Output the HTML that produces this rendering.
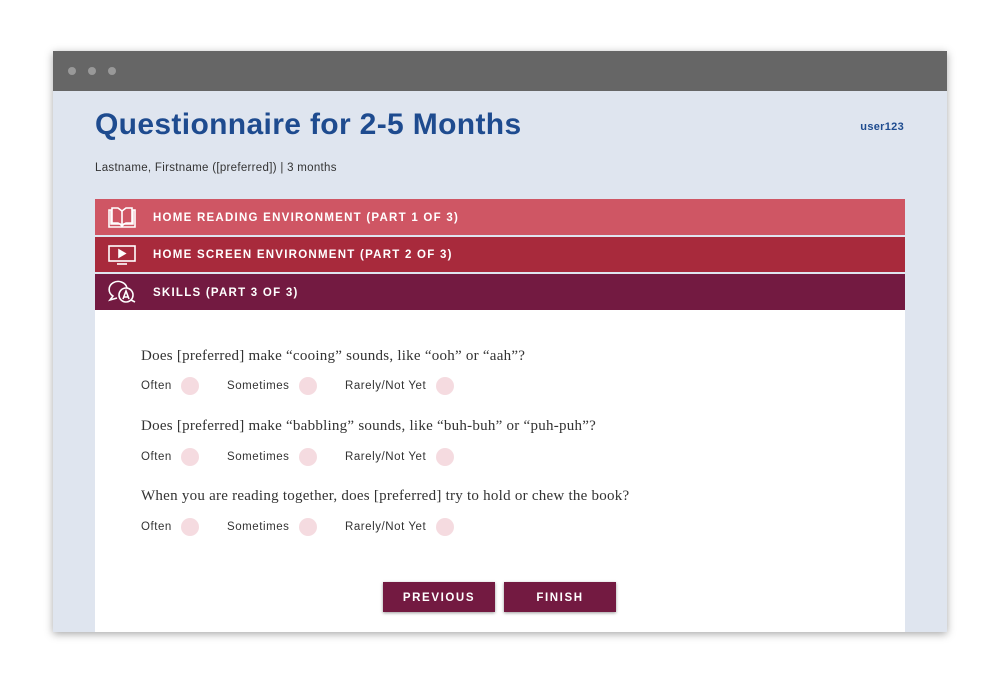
<!DOCTYPE html>
<html><head><style>
body{margin:0;width:1000px;height:684px;background:#fff;position:relative;font-family:"Liberation Sans",sans-serif;overflow:hidden}
.win{position:absolute;left:53px;top:51px;width:894px;height:581px;background:#dfe5ef;box-shadow:0 2px 8px rgba(0,0,0,.35)}
.tb{height:40px;background:#666;position:relative}
.dot{position:absolute;top:16px;width:8px;height:8px;border-radius:50%;background:#999}
h1{position:absolute;left:42px;top:57px;margin:0;font-size:30px;color:#1e4b8f;font-weight:bold;letter-spacing:0.35px}
.user{position:absolute;right:43px;top:70px;font-size:11px;color:#1e4b8f;font-weight:bold;letter-spacing:0.3px}
.sub{position:absolute;left:42px;top:111px;font-size:11.5px;color:#333;letter-spacing:0.3px}
.bar{position:absolute;left:42px;width:810px;color:#fff;font-size:11.5px;font-weight:bold;letter-spacing:1.25px}
.bar span{position:absolute;left:58px;top:1px}
.bar svg{position:absolute;left:12px}
.panel{position:absolute;left:42px;top:259px;width:810px;height:322px;background:#fff}
.q{position:absolute;left:46px;font-family:"Liberation Serif",serif;font-size:15px;color:#333;letter-spacing:0.25px}
.opt{position:absolute;font-size:11.5px;color:#333;letter-spacing:0.55px}
.c{position:absolute;width:18px;height:18px;border-radius:50%;background:#f5dbe0}
.btn{position:absolute;top:272px;width:112px;height:30px;background:#731a41;color:#fff;font-size:11.5px;font-weight:bold;letter-spacing:1.6px;text-align:center;line-height:32px;box-shadow:0 1px 3px rgba(0,0,0,.4)}
</style></head><body>
<div class="win">
<div class="tb"><div class="dot" style="left:15px"></div><div class="dot" style="left:35px"></div><div class="dot" style="left:55px"></div></div>
<h1>Questionnaire for 2-5 Months</h1>
<div class="user">user123</div>
<div class="sub">Lastname, Firstname ([preferred]) | 3 months</div>
<div class="bar" style="top:148px;height:36px;line-height:36px;background:#cf5664">
<svg width="30" height="22" style="top:7px" viewBox="0 0 30 22" fill="none" stroke="#fff" stroke-width="1.6"><path d="M2 4h2v14h9l2 2 2-2h9V4h2v17H2z"/><path d="M5 2v15h6l4 2 4-2h6V2h-6l-4 3-4-3z"/><path d="M15 5v14"/></svg>
<span>HOME READING ENVIRONMENT (PART 1 OF 3)</span></div>
<div class="bar" style="top:186px;height:35px;line-height:35px;background:#a82a3c">
<svg width="30" height="22" style="top:7px" viewBox="0 0 30 22" fill="none" stroke="#fff" stroke-width="1.6"><rect x="2" y="2" width="26" height="15"/><path d="M12 6v7l6-3.5z" fill="#fff"/><path d="M10 20h10"/></svg>
<span>HOME SCREEN ENVIRONMENT (PART 2 OF 3)</span></div>
<div class="bar" style="top:223px;height:36px;line-height:36px;background:#731a41">
<svg width="30" height="24" style="top:6px" viewBox="0 0 30 24" fill="none" stroke="#fff" stroke-width="1.6"><path d="M20 8A9 8 0 1 0 6 16l-3 4 7-2"/><circle cx="19" cy="15" r="7"/><path d="M16 19l3-8 3 8M17 17h4"/><path d="M24 20l4 2"/></svg>
<span>SKILLS (PART 3 OF 3)</span></div>
<div class="panel">
<div class="q" style="top:38px">Does [preferred] make “cooing” sounds, like “ooh” or “aah”?</div>
<div class="q" style="top:108px">Does [preferred] make “babbling” sounds, like “buh-buh” or “puh-puh”?</div>
<div class="q" style="top:178px">When you are reading together, does [preferred] try to hold or chew the book?</div>
<div class="opt" style="left:46px;top:70px">Often</div><div class="c" style="left:86px;top:67px"></div>
<div class="opt" style="left:132px;top:70px">Sometimes</div><div class="c" style="left:204px;top:67px"></div>
<div class="opt" style="left:250px;top:70px">Rarely/Not Yet</div><div class="c" style="left:341px;top:67px"></div>
<div class="opt" style="left:46px;top:141px">Often</div><div class="c" style="left:86px;top:138px"></div>
<div class="opt" style="left:132px;top:141px">Sometimes</div><div class="c" style="left:204px;top:138px"></div>
<div class="opt" style="left:250px;top:141px">Rarely/Not Yet</div><div class="c" style="left:341px;top:138px"></div>
<div class="opt" style="left:46px;top:211px">Often</div><div class="c" style="left:86px;top:208px"></div>
<div class="opt" style="left:132px;top:211px">Sometimes</div><div class="c" style="left:204px;top:208px"></div>
<div class="opt" style="left:250px;top:211px">Rarely/Not Yet</div><div class="c" style="left:341px;top:208px"></div>
<div class="btn" style="left:288px">PREVIOUS</div>
<div class="btn" style="left:409px">FINISH</div>
</div>
</div>
</body></html>
